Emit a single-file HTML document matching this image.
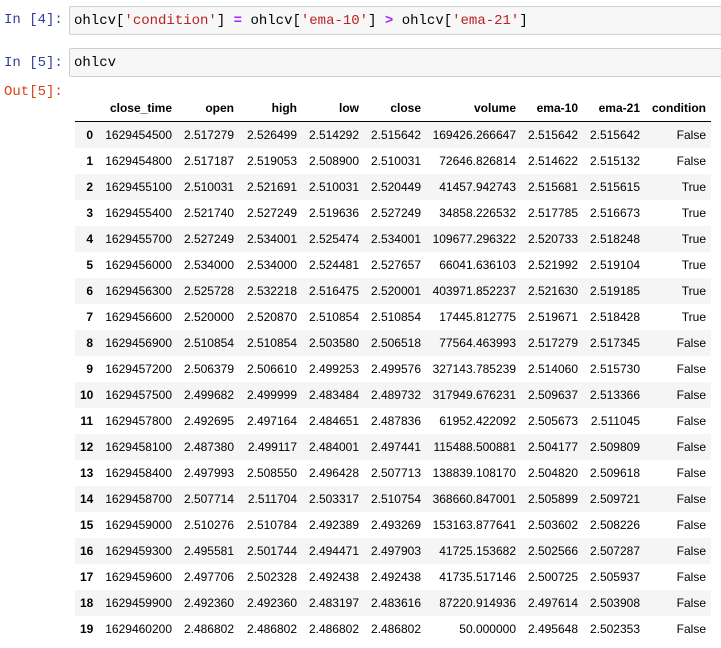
<!DOCTYPE html>
<html><head><style>
body{margin:0;background:#fff;width:721px;height:648px;overflow:hidden;position:relative;font-family:"Liberation Sans",sans-serif}
.p{position:absolute;left:4px;font-family:"Liberation Mono",monospace;font-size:14px;color:#303f9f}
.o{color:#d84315}
.box{position:absolute;left:69px;width:660px;height:29px;background:#f7f7f7;border:1px solid #cfcfcf;border-radius:2px;font-family:"Liberation Mono",monospace;font-size:14px;line-height:29px;padding-left:4px;box-sizing:border-box;color:#000}
.s{color:#ba2121}.op{color:#aa22ff;font-weight:bold}
.tw{position:absolute;left:75px;top:95px}
table{border-collapse:collapse;table-layout:fixed;width:636px;font-size:12px;color:#000}
td,th{text-align:right;padding:0 5px;height:26px;white-space:nowrap;overflow:visible}
th{font-weight:bold}
thead tr{border-bottom:1px solid #000}
tbody tr:nth-child(odd){background:#f5f5f5}
</style></head><body>
<div class="p" style="top:12px">In [4]:</div>
<div class="box" style="top:6px">ohlcv[<span class="s">'condition'</span>] <span class="op">=</span> ohlcv[<span class="s">'ema-10'</span>] <span class="op">&gt;</span> ohlcv[<span class="s">'ema-21'</span>]</div>
<div class="p" style="top:55px">In [5]:</div>
<div class="box" style="top:48px">ohlcv</div>
<div class="p o" style="top:84px">Out[5]:</div>
<div class="tw"><table>
<colgroup><col style="width:23px"><col style="width:79px"><col style="width:62px"><col style="width:63px"><col style="width:62px"><col style="width:62px"><col style="width:95px"><col style="width:62px"><col style="width:62px"><col style="width:66px"></colgroup>
<thead><tr><th></th><th>close_time</th><th>open</th><th>high</th><th>low</th><th>close</th><th>volume</th><th>ema-10</th><th>ema-21</th><th>condition</th></tr></thead>
<tbody>
<tr><th>0</th><td>1629454500</td><td>2.517279</td><td>2.526499</td><td>2.514292</td><td>2.515642</td><td>169426.266647</td><td>2.515642</td><td>2.515642</td><td>False</td></tr>
<tr><th>1</th><td>1629454800</td><td>2.517187</td><td>2.519053</td><td>2.508900</td><td>2.510031</td><td>72646.826814</td><td>2.514622</td><td>2.515132</td><td>False</td></tr>
<tr><th>2</th><td>1629455100</td><td>2.510031</td><td>2.521691</td><td>2.510031</td><td>2.520449</td><td>41457.942743</td><td>2.515681</td><td>2.515615</td><td>True</td></tr>
<tr><th>3</th><td>1629455400</td><td>2.521740</td><td>2.527249</td><td>2.519636</td><td>2.527249</td><td>34858.226532</td><td>2.517785</td><td>2.516673</td><td>True</td></tr>
<tr><th>4</th><td>1629455700</td><td>2.527249</td><td>2.534001</td><td>2.525474</td><td>2.534001</td><td>109677.296322</td><td>2.520733</td><td>2.518248</td><td>True</td></tr>
<tr><th>5</th><td>1629456000</td><td>2.534000</td><td>2.534000</td><td>2.524481</td><td>2.527657</td><td>66041.636103</td><td>2.521992</td><td>2.519104</td><td>True</td></tr>
<tr><th>6</th><td>1629456300</td><td>2.525728</td><td>2.532218</td><td>2.516475</td><td>2.520001</td><td>403971.852237</td><td>2.521630</td><td>2.519185</td><td>True</td></tr>
<tr><th>7</th><td>1629456600</td><td>2.520000</td><td>2.520870</td><td>2.510854</td><td>2.510854</td><td>17445.812775</td><td>2.519671</td><td>2.518428</td><td>True</td></tr>
<tr><th>8</th><td>1629456900</td><td>2.510854</td><td>2.510854</td><td>2.503580</td><td>2.506518</td><td>77564.463993</td><td>2.517279</td><td>2.517345</td><td>False</td></tr>
<tr><th>9</th><td>1629457200</td><td>2.506379</td><td>2.506610</td><td>2.499253</td><td>2.499576</td><td>327143.785239</td><td>2.514060</td><td>2.515730</td><td>False</td></tr>
<tr><th>10</th><td>1629457500</td><td>2.499682</td><td>2.499999</td><td>2.483484</td><td>2.489732</td><td>317949.676231</td><td>2.509637</td><td>2.513366</td><td>False</td></tr>
<tr><th>11</th><td>1629457800</td><td>2.492695</td><td>2.497164</td><td>2.484651</td><td>2.487836</td><td>61952.422092</td><td>2.505673</td><td>2.511045</td><td>False</td></tr>
<tr><th>12</th><td>1629458100</td><td>2.487380</td><td>2.499117</td><td>2.484001</td><td>2.497441</td><td>115488.500881</td><td>2.504177</td><td>2.509809</td><td>False</td></tr>
<tr><th>13</th><td>1629458400</td><td>2.497993</td><td>2.508550</td><td>2.496428</td><td>2.507713</td><td>138839.108170</td><td>2.504820</td><td>2.509618</td><td>False</td></tr>
<tr><th>14</th><td>1629458700</td><td>2.507714</td><td>2.511704</td><td>2.503317</td><td>2.510754</td><td>368660.847001</td><td>2.505899</td><td>2.509721</td><td>False</td></tr>
<tr><th>15</th><td>1629459000</td><td>2.510276</td><td>2.510784</td><td>2.492389</td><td>2.493269</td><td>153163.877641</td><td>2.503602</td><td>2.508226</td><td>False</td></tr>
<tr><th>16</th><td>1629459300</td><td>2.495581</td><td>2.501744</td><td>2.494471</td><td>2.497903</td><td>41725.153682</td><td>2.502566</td><td>2.507287</td><td>False</td></tr>
<tr><th>17</th><td>1629459600</td><td>2.497706</td><td>2.502328</td><td>2.492438</td><td>2.492438</td><td>41735.517146</td><td>2.500725</td><td>2.505937</td><td>False</td></tr>
<tr><th>18</th><td>1629459900</td><td>2.492360</td><td>2.492360</td><td>2.483197</td><td>2.483616</td><td>87220.914936</td><td>2.497614</td><td>2.503908</td><td>False</td></tr>
<tr><th>19</th><td>1629460200</td><td>2.486802</td><td>2.486802</td><td>2.486802</td><td>2.486802</td><td>50.000000</td><td>2.495648</td><td>2.502353</td><td>False</td></tr>
</tbody></table></div>
</body></html>
